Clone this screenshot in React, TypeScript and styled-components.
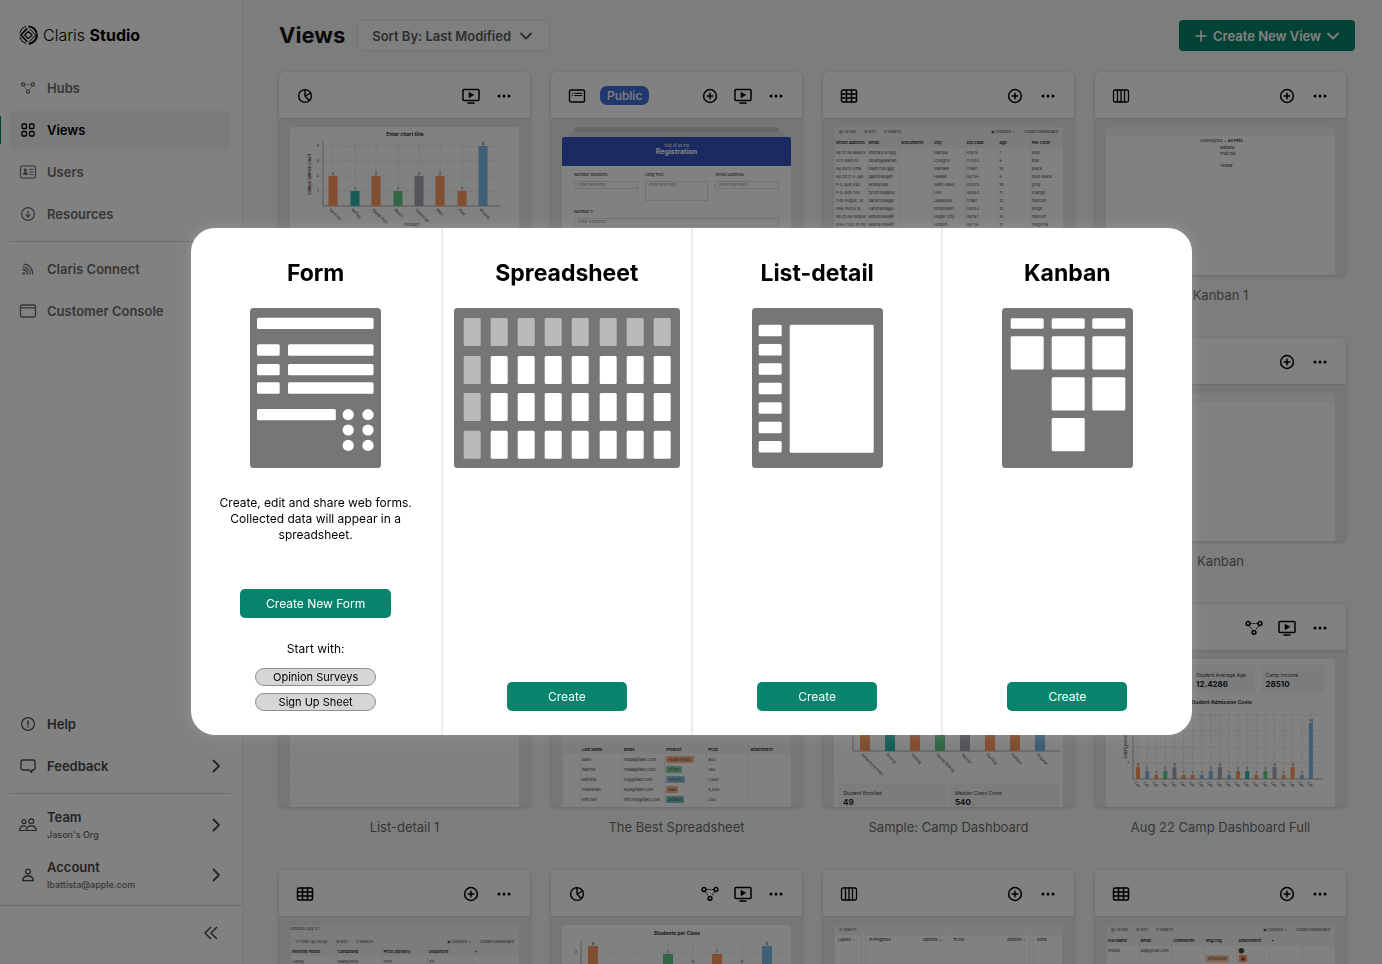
import React from "react";
import styled, { createGlobalStyle, css } from "styled-components";

const GlobalStyle = createGlobalStyle`
  *, *::before, *::after { box-sizing: border-box; }
  html, body { margin: 0; padding: 0; }
  body {
    font-family: Inter, "Liberation Sans", sans-serif;
    font-size: 13px;
    color: #000;
    background: #f6f9f8;
    overflow: hidden;
  }
  button, select, a { font: inherit; color: inherit; }
  a { text-decoration: none; }
`;

/* ---------- shell ---------- */

const Shell = styled.div`
  display: flex;
  height: 100vh;
  background: #f6f9f8;
`;

const Sidebar = styled.aside`
  display: flex;
  flex-direction: column;
  flex: 0 0 242px;
  background: #fff;
  box-shadow: 1px 0 1px #eceeed;
`;

const Brand = styled.a`
  display: flex;
  align-items: center;
  gap: 5px;
  height: 69px;
  padding-left: 19px;
  font-size: 16px;
  font-weight: 300;

  b { font-weight: 700; }
`;

const NavGroup = styled.nav`
  display: flex;
  flex-direction: column;
  gap: 4px;
  padding: 0 11px 0 9px;
`;

const NavItem = styled.a<{ $active?: boolean; $strong?: boolean }>`
  display: flex;
  align-items: center;
  gap: 10px;
  height: 38px;
  padding: 0 6px 0 10px;
  border-radius: 6px;
  font-weight: 600;
  color: ${(p) => (p.$active ? "#000" : p.$strong ? "#484848" : "#6c6c6c")};
  ${(p) =>
    p.$active &&
    css`
      position: relative;
      background: #f0f5f3;
      &::before {
        content: "";
        position: absolute;
        left: -9px;
        top: 5px;
        bottom: 5px;
        width: 1px;
        background: #07846b;
      }
    `}
  svg { flex: none; }
`;

const NavLabel = styled.span`
  flex: 1;
`;

const ProfileItem = styled(NavItem)`
  height: 50px;
`;

const ProfileText = styled.span`
  display: flex;
  flex: 1;
  flex-direction: column;
  gap: 3px;
  line-height: 16px;

  small {
    font-size: 9px;
    line-height: 14px;
    font-weight: 500;
    color: #6c6c6c;
  }
`;

const ProfileGroup = styled.nav`
  padding: 0 11px 5px 9px;
`;

const Rule = styled.hr<{ $low?: boolean }>`
  width: 222px;
  height: 1px;
  margin: 8px 0 ${(p) => (p.$low ? 6 : 8)}px 9px;
  border: 0;
  background: #dcdcdc;
`;

const Spacer = styled.div`
  flex: 1;
`;

const SidebarFooter = styled.div`
  display: flex;
  justify-content: flex-end;
  align-items: center;
  height: 59px;
  padding: 0 22px 4px 0;
  border-top: 1px solid #d6d6d6;
`;

const PlainButton = styled.button`
  display: flex;
  padding: 0;
  border: 0;
  background: none;
  color: ${(p) => p.color || "#000"};
`;

const Main = styled.main`
  flex: 1;
  min-width: 0;
  overflow: hidden;
`;

const TopBar = styled.header`
  display: flex;
  align-items: center;
  gap: 12px;
  padding: 20px 27px 21px 37px;
`;

const PageTitle = styled.h1`
  margin: 0;
  font-size: 22px;
  line-height: 31px;
  font-weight: 700;
  color: #111;
`;

const SortField = styled.label`
  display: flex;
  align-items: center;
  height: 31px;
  padding-right: 16px;
  border: 1px solid #e4e7e6;
  border-radius: 4px;
  background: #fafcfb;
  color: #5a5a5a;

  select {
    appearance: none;
    height: 29px;
    padding: 0 8px 0 14px;
    border: 0;
    background: transparent;
    font-weight: 600;
  }
`;

const CreateViewButton = styled.button`
  display: flex;
  align-items: center;
  gap: 5px;
  height: 31px;
  margin-left: auto;
  padding: 0 15px;
  border: 0;
  border-radius: 4px;
  background: #07846b;
  color: #fff;
  font-weight: 600;
`;

/* ---------- cards ---------- */

const CardGrid = styled.section`
  display: grid;
  grid-template-columns: repeat(4, minmax(0, 1fr));
  gap: 33px 21px;
  padding: 0 36px 0 37px;
`;

const CardCell = styled.article`
  display: flex;
  flex-direction: column;
  gap: 10px;
  height: 233px;
`;

const CardFrame = styled.div`
  display: flex;
  flex-direction: column;
  height: 203px;
  overflow: hidden;
  border-radius: 6px;
  background: #e9e9e9;
  box-shadow: 0 1px 4px rgba(0, 0, 0, 0.2);
`;

const CardHeader = styled.div`
  display: flex;
  flex: 0 0 47px;
  align-items: center;
  gap: 15px;
  padding: 1px 17px 0;
  border-bottom: 1px solid #d6d6d6;
  background: #fff;
`;

const PublicBadge = styled.span`
  margin-left: -1px;
  padding: 0 7px;
  border-radius: 7px;
  background: #4070d8;
  color: #fff;
  font-size: 12px;
  line-height: 19px;
  font-weight: 500;
`;

const CardTitle = styled.h2`
  margin: 0;
  font-size: 13px;
  line-height: 20px;
  font-weight: 400;
  text-align: center;
  color: #6c6c6c;
`;

const Preview = styled.div<{ $clear?: boolean }>`
  flex: 1;
  min-height: 0;
  margin: 8px 11px 0;
  overflow: hidden;
  border-radius: 3px 3px 0 0;
  background: ${(p) => (p.$clear ? "transparent" : "#fff")};
  font-size: 4px;
  line-height: 8px;
  color: #444;

  > svg { display: block; width: 100%; }
`;

/* ---------- previews ---------- */

const ToolStrip = styled.div`
  display: flex;
  gap: 8px;
  height: 9px;
  padding: 1px 5px 0;
  background: #f6f6f6;

  span:nth-child(3) { margin-right: auto; }
`;

const SheetName = styled.div`
  height: 12px;
  background: #f6f6f6;
`;

const DataTable = styled.table<{ $row: number }>`
  width: 100%;
  table-layout: fixed;
  border-collapse: collapse;

  th, td {
    height: ${(p) => p.$row}px;
    padding: 0 1px;
    border-left: 1px solid #f0f0f0;
    text-align: left;
    white-space: nowrap;
    line-height: ${(p) => p.$row - 1}px;
  }
  th {
    height: ${(p) => (p.$row === 8 ? 12 : p.$row)}px;
    font-weight: 600;
    color: #222;
    background: #f6f6f6;
  }
`;

const Tag = styled.span<{ $tone: string }>`
  padding: 1px 2px;
  border-radius: 1px;
  background: ${(p) => p.$tone};
`;

const StackSheet = styled.div<{ $inset: number; $tone: string }>`
  height: 5px;
  margin: 0 ${(p) => p.$inset}px;
  border-radius: 3px 3px 0 0;
  background: ${(p) => p.$tone};
`;

const Banner = styled.div`
  height: 29px;
  padding-top: 6px;
  border-radius: 2px 2px 0 0;
  background: #3656c0;
  color: #fff;
  text-align: center;
  line-height: 6px;

  strong { display: block; font-size: 7px; }
`;

const FormSheet = styled.div`
  display: grid;
  grid-template-columns: repeat(3, 1fr);
  align-content: start;
  gap: 7px;
  height: 110px;
  padding: 5px 12px;
  background: #fff;
`;

const FormField = styled.div<{ $tall?: boolean; $wide?: boolean }>`
  grid-column: ${(p) => (p.$wide ? "1 / -1" : "auto")};
  font-weight: 500;

  p {
    height: ${(p) => (p.$tall ? 20 : 8)}px;
    margin: 2px 0 0;
    padding-left: 3px;
    border: 1px solid #e2e2e2;
    line-height: 6px;
    font-weight: 400;
    color: #888;
  }
`;

const Tiles = styled.div`
  display: grid;
  grid-template-columns: 1fr 1fr;
  gap: 3px;
  padding: 8px 4px;
`;

const DashTiles = styled(Tiles)`
  grid-template-columns: 68px 1fr 1fr;
  gap: 6px;
  padding: 6px 11px 0;
  height: 33px;
`;

const Tile = styled.div`
  height: 27px;
  padding: 6px 5px 0;
  background: #f6f6f6;
  font-size: 5px;
  line-height: 8px;

  strong { display: block; font-size: 8px; line-height: 10px; color: #222; }
`;

const BoardStrip = styled.div`
  display: grid;
  grid-template-columns: 28px 1fr 1fr 30px;
  gap: 3px;

  div {
    display: flex;
    justify-content: space-between;
    height: 40px;
    padding: 1px 3px;
    border: 1px solid #f2f2f2;
    font-weight: 500;
  }
`;

const ListLines = styled.div`
  height: 148px;
  background: repeating-linear-gradient(#fff 0 15px, #f6f6f6 15px 16px);
`;

const SheetPad = styled.div`
  height: 85px;
  border-bottom: 10px solid #f6f6f6;
`;

const KanbanMini = styled.div`
  margin: 1px 0 0 94px;

  p { margin: 0 0 0 20px; font-weight: 500; line-height: 6px; }
  p + p { margin-bottom: 6px; }
`;

type Bar = { x: number; h: number; c: string; v?: string; l?: string };
const C = { o: "#ff9a60", t: "#2fb8ac", g: "#64cc88", p: "#aaa6b2", b: "#7cbde8" };

function BarChart({ title, tx, ty, axis, right, top, base, step, width, bars, label, side, h = 148 }: {
  title?: string; tx: number; ty: number; axis: number; right: number; top: number; base: number; step: number;
  width: number; bars: Bar[]; label?: string; side?: string; h?: number;
}) {
  const lines: number[] = [];
  for (let y = base - step; y > top; y -= step) lines.push(y);
  return (
    <svg viewBox={`0 0 229 ${h}`} fontSize="4" fill="#333">
      {title && <text x={tx} y={ty} textAnchor="middle" fontWeight="700" fontSize="5">{title}</text>}
      <g stroke="#e6e6e6" strokeDasharray="2 1">
        {lines.map((y) => <path key={y} d={`M${axis} ${y}H${right}`} />)}
        {bars.map((b) => <path key={b.x} d={`M${b.x} ${top}V${base}`} />)}
      </g>
      <path d={`M${axis} ${top}V${base}H${right}`} fill="none" stroke="#aaa" />
      {lines.map((y, i) => <text key={y} x={axis - 4} y={y + 1} textAnchor="end">{i + 1}</text>)}
      {bars.map((b) => (
        <g key={b.x}>
          <rect x={b.x - width / 2} y={base - b.h} width={width} height={b.h} fill={b.c} />
          {b.v && <text x={b.x} y={base - b.h - 1} textAnchor="middle">{b.v}</text>}
          {b.l && <text transform={`translate(${b.x - 4} ${base + 4}) rotate(45)`}>{b.l}</text>}
        </g>
      ))}
      {label && <text x="122" y={base + 20} textAnchor="middle">{label}</text>}
      {side && <text transform={`translate(21 ${(top + base) / 2 + 1}) rotate(-90)`} textAnchor="middle">{side}</text>}
    </svg>
  );
}

function Tools({ filter }: { filter?: boolean }) {
  return (
    <ToolStrip>
      <span>{filter ? "▽ Filter  ▤ Group" : "▤ Group"}</span><span>⇅ Sort</span><span>⚲ Search</span>
      <span>◉ Columns ⌄</span><span>Create Dashboard</span>
    </ToolStrip>
  );
}

const addressRows = [
  ["Ap #138 Mauris", "mdina3787@g", "", "Nampa", "61875", "7", "blue"],
  ["472 Nam St.", "dicam@wanan", "", "Cologne", "27633", "9", "teal"],
  ["Ap #513 Uma", "team7387@g", "", "Warsaw", "21987", "16", "black"],
  ["Ap #221 A Jan", "gabri288@m", "", "Hawaii", "08736", "6", "blue-black"],
  ["P.O. Box 482", "kelsey388", "", "Saint-Malo", "63325", "18", "grey"],
  ["P.O. Box 740", "tyron398@ou", "", "Lviv", "49303", "11", "orange"],
  ["240 Augue, St", "darlen288@y", "", "Jayapura", "12987", "13", "maroon"],
  ["498 Purus St.", "carol1838@p", "", "Eindhoven", "29353", "10", "beige"],
  ["Ap #248 Neque", "almon3889@", "", "Hoger City", "48787", "15", "maroon"],
  ["936-7202 In Rd.", "akaha3488@", "", "Hodeni", "08736", "12", "magenta"],
];

function AddressPreview() {
  return (
    <Preview>
      <Tools />
      <DataTable $row={8}>
        <thead><tr>{["Street Address", "Email", "Documents", "City", "Zip Code", "Age", "Fav Color"].map((h) => <th key={h}>{h}</th>)}</tr></thead>
        <tbody>{addressRows.map((r) => <tr key={r[0]}>{r.map((c, i) => <td key={i}>{c}</td>)}</tr>)}</tbody>
      </DataTable>
    </Preview>
  );
}

const productRows = [
  ["Bass", "muda@fake.com", "Apple Music", "#ffb78c", "$53"],
  ["Warner", "hvala@fake.com", "Jif Inc", "#8fd8a8", "180"],
  ["Battista", "hog@fake.com", "Shopify", "#9ccbe8", "1,885"],
  ["Shanahan", "kyla@fake.com", "Sale", "#ffb78c", "6,500"],
  ["Mitchell", "mitchell@fake.com", "Default", "#7cc8c4", "350"],
];

function ProductPreview() {
  return (
    <Preview>
      <SheetPad />
      <DataTable $row={10}>
        <colgroup><col width="18" /><col /><col /><col /><col /><col /></colgroup>
        <thead><tr><th />{["Last Name", "Email", "Product", "Price", "Attachment"].map((h) => <th key={h}>{h}</th>)}</tr></thead>
        <tbody>
          {productRows.map((r) => (
            <tr key={r[0]}><td /><td>{r[0]}</td><td>{r[1]}</td><td><Tag $tone={r[3]}>{r[2]}</Tag></td><td>{r[4]}</td><td /></tr>
          ))}
        </tbody>
      </DataTable>
    </Preview>
  );
}

function FormPreview() {
  return (
    <Preview $clear>
      <StackSheet $inset={12} $tone="#c9cccb" />
      <StackSheet $inset={6} $tone="#dbdedd" />
      <Banner>Title of all the<strong>Registration</strong></Banner>
      <FormSheet>
        <FormField>Number Students<p>Enter text here</p></FormField>
        <FormField $tall>Long Text<p>Enter text here</p></FormField>
        <FormField>Street Address<p>Enter text here</p></FormField>
        <FormField $wide>Number 2<p>Enter a number</p></FormField>
      </FormSheet>
    </Preview>
  );
}

const firstBars: Bar[] = [
  { x: 43, h: 30, c: C.o, v: "2", l: "SanFran" }, { x: 65, h: 15, c: C.t, v: "1", l: "NoTag" },
  { x: 86, h: 30, c: C.o, v: "2", l: "Apple Gdn" }, { x: 108, h: 15, c: C.g, v: "1", l: "Music" },
  { x: 129, h: 30, c: C.p, v: "2", l: "Subscript" }, { x: 150, h: 30, c: C.o, v: "2", l: "Mac" },
  { x: 172, h: 15, c: C.o, v: "1", l: "iPad" }, { x: 193, h: 60, c: C.b, v: "4", l: "iPhone" },
];

const campLabels = ["Adventure Hiking", "Diving", "Sailing", "Horse Riding", "Tennis", "Surfing", "Pottery", "Theater"];
const campColors = [C.o, C.t, C.o, C.g, C.p, C.o, C.o, C.b];
const campBars: Bar[] = campLabels.map((l, i) => ({ x: 31 + i * 25, h: 40, c: campColors[i], l }));

const costHeights = [12, 8, 4, 8, 12, 4, 4, 4, 8, 12, 4, 8, 8, 4, 8, 12, 4, 12, 4, 56];
const costColors = [C.o, C.b, C.o, C.g, C.p, C.o, C.o, C.b, C.b, C.p, C.b, C.o, C.t, C.o, C.g, C.p, C.o, C.o, C.b, C.b];
const costBars: Bar[] = costHeights.map((h, i) => ({ x: 32 + i * 9.1, h, c: costColors[i], v: String(h / 4), l: "Cal" }));

const classBars: Bar[] = [
  { x: 31, h: 60, c: C.o, v: "9" }, { x: 106, h: 52, c: C.g, v: "7" }, { x: 131, h: 42, c: C.p, v: "5" },
  { x: 155, h: 52, c: C.o, v: "7" }, { x: 180, h: 42, c: C.o, v: "6" }, { x: 205, h: 60, c: C.b, v: "9" },
];

/* ---------- icons ---------- */

function Icon({ children, size = 18, w = 1.4, box = "0 0 18 18" }: { children: React.ReactNode; size?: number; w?: number; box?: string }) {
  return (
    <svg width={size} height={size} viewBox={box} fill="none" stroke="currentColor" strokeWidth={w} strokeLinecap="round" strokeLinejoin="round" aria-hidden="true">
      {children}
    </svg>
  );
}

const Dots = () => <Icon><g fill="currentColor" stroke="none"><circle cx="4" cy="9" r="1.5" /><circle cx="9" cy="9" r="1.5" /><circle cx="14" cy="9" r="1.5" /></g></Icon>;
const Plus = () => <Icon w={1.5}><circle cx="9" cy="9" r="6.4" /><path d="M9 6.2v5.6M6.2 9h5.6" /></Icon>;
const Screen = () => <Icon w={1.5}><rect x="1" y="2.5" width="16" height="11" rx="1" /><path d="M6 16h6" /><path d="M7 5.5v5.2L11.6 8z" fill="currentColor" strokeWidth=".6" /></Icon>;
const Pie = () => <Icon w={1.4}><circle cx="9" cy="9" r="6.4" /><path d="M9 2.6V9l4.3 4.6M9 9l5.8-3" /></Icon>;
const FormIcon = () => <Icon w={1.4}><rect x="1.5" y="3" width="15" height="12" rx="1.5" /><path d="M4.2 6.3h.4M6.6 6.3h7.2M4.2 8.6h.4M6.6 8.6h7.2" strokeWidth="1" /></Icon>;
const TableIcon = () => <Icon w={1.5}><rect x="1.5" y="3" width="15" height="12" rx="1.5" /><path d="M1.5 7h15M1.5 11h15M6.5 3v12M11.5 3v12" /></Icon>;
const BoardIcon = () => <Icon w={1.3}><rect x="1.5" y="3" width="15" height="12" rx="1.5" /><path d="M5.5 3v12M9 3v12M12.5 3v12" /></Icon>;
const HubIcon = ({ box }: { box?: string }) => <Icon w={1.5} box={box}><circle cx="3" cy="4.5" r="1.9" /><circle cx="15" cy="4.5" r="1.9" /><circle cx="9" cy="13.3" r="1.9" /><path d="M6 4.5h6M4.5 7l2.8 4M13.5 7l-2.800 4" strokeWidth=".9" strokeDasharray="1 1.5" /></Icon>;
const ViewsIcon = () => <Icon w={1.3}><rect x="3" y="3" width="4.500" height="4.500" rx="1" /><rect x="10.500" y="3" width="4.500" height="4.500" rx="1" /><rect x="3" y="10.500" width="4.500" height="4.500" rx="1" /><rect x="10.500" y="10.500" width="4.500" height="4.500" rx="1" /></Icon>;
const UsersIcon = () => <Icon w={1.2}><rect x="1.500" y="3" width="15" height="12" rx="1.500" /><circle cx="6.300" cy="7.200" r="1" fill="currentColor" /><path d="M4.500 11.200c0-2 3.800-2 3.800 0z" fill="currentColor" /><path d="M10.800 6.400h3.200M10.800 9h3.200M10.800 11.600h3.200" strokeWidth=".9" /></Icon>;
const DownIcon = () => <Icon w={1.2}><circle cx="9" cy="9" r="6.400" /><path d="M9 6v6M6.800 9.900L9 12.100l2.200-2.200" /></Icon>;
const FeedIcon = () => <Icon w={1.3}><path d="M4 9.500a5 5 0 0 1 4.500 4.700M4 6.800a7.600 7.600 0 0 1 7.200 7.400M5 4.200c5 .2 8.600 4.400 8.800 9.800" /><circle cx="4.700" cy="13.500" r=".7" fill="currentColor" /></Icon>;
const WindowIcon = () => <Icon w={1.3}><rect x="1.500" y="3" width="15" height="12" rx="1.500" /><path d="M1.500 5.800h15" /></Icon>;
const HelpIcon = () => <Icon w={1.2}><circle cx="9" cy="9" r="6.400" /><path d="M9 6v3.500M9 11.800v.2" strokeWidth="1.400" /></Icon>;
const ChatIcon = () => <Icon w={1.3}><path d="M4 3h10a2 2 0 0 1 2 2v6.500a1.500 1.500 0 0 1-1.500 1.500h-1.700v2.500l-3-2.500H4a2 2 0 0 1-2-2V5a2 2 0 0 1 2-2z" /></Icon>;
const TeamIcon = () => <Icon w={1.2}><circle cx="5" cy="5.600" r="2" /><circle cx="12.300" cy="5.200" r="2.400" /><path d="M6 14.500H.7c-.4-3 1.700-4.600 3.900-4.600 1 0 1.600.2 2.200.6M7.300 14.500h10c-.2-3-2.200-4.600-4.900-4.600s-4.900 1.600-5.100 4.600z" /></Icon>;
const PersonIcon = () => <Icon w={1.3}><circle cx="9" cy="5.600" r="2.400" /><path d="M3.700 14.600h10.600c-.2-3-2.500-4.600-5.300-4.600s-5.100 1.600-5.300 4.600z" /></Icon>;
const ChevronRight = () => <Icon w={1.8}><path d="M6.500 3.500L12 9l-5.500 5.500" /></Icon>;
const ChevronDown = () => <Icon size={14} box="0 0 14 14" w={1.8}><path d="M2 4.500l5 5 5-5" /></Icon>;
const SmallPlus = () => <Icon size={14} box="0 0 14 14" w={1.6}><path d="M7 2v10M2 7h10" /></Icon>;
const Collapse = () => <Icon w={1.5}><path d="M8.500 3.500L3 9l5.500 5.500M14.500 3.500L9 9l5.500 5.500" /></Icon>;
const ClarisMark = () => (
  <svg width="19" height="20" viewBox="0 0 19 20" fill="none" stroke="#000" aria-hidden="true">
    <path d="M7.200 1.300A9 9 0 0 0 .8 7.800M.8 12a9 9 0 0 0 6.400 6.600" strokeWidth="1" />
    <path d="M9.300 1.300C14 1.300 17.600 5 17.900 9.800" strokeWidth="1.800" />
    <path d="M17.900 10c-.2 4.800-3.600 8.300-8.200 8.600" strokeWidth="2.200" />
    <path d="M8.300 3.400L1.900 10l6.400 6.600" strokeWidth="1.700" />
    <path d="M10.600 3.700l6 6.300-6 6.300" strokeWidth="1" />
    <path d="M9.400 6.300L5.700 10l3.700 3.700L13.100 10z" strokeWidth="1.200" strokeLinejoin="round" />
  </svg>
);

/* ---------- card ---------- */

const actionIcons = { plus: Plus, screen: Screen, hub: HubIcon, dots: Dots };
const actionNames = { plus: "Add", screen: "Present", hub: "Hubs", dots: "More" };
type Action = keyof typeof actionIcons;

function ViewCard({ icon, badge, actions = [], title, children }: {
  icon?: React.ReactNode; badge?: string; actions?: Action[]; title?: string; children?: React.ReactNode;
}) {
  return (
    <CardCell>
      <CardFrame>
        <CardHeader>
          {icon}
          {badge && <PublicBadge>{badge}</PublicBadge>}
          <Spacer />
          {actions.map((a) => {
            const Glyph = actionIcons[a];
            return <PlainButton key={a} aria-label={actionNames[a]}><Glyph /></PlainButton>;
          })}
        </CardHeader>
        {children}
      </CardFrame>
      {title && <CardTitle>{title}</CardTitle>}
    </CardCell>
  );
}

/* ---------- dialog ---------- */

const Backdrop = styled.div`
  position: fixed;
  inset: 0;
  display: flex;
  align-items: center;
  justify-content: center;
  padding: 20px 20px 21px;
  background: rgba(0, 0, 0, 0.495);
`;

const Dialog = styled.div`
  display: grid;
  grid-template-columns: repeat(4, minmax(0, 1fr));
  width: 100%;
  max-width: 1001px;
  border-radius: 24px;
  background: #fff;
  box-shadow: 0 0 12px rgba(255, 255, 255, 0.16);
`;

const Option = styled.section`
  display: flex;
  flex-direction: column;
  align-items: center;
  padding: 31px 10px 24px;
  text-align: center;

  & + & { border-left: 2px solid #ececec; }

  > svg { display: block; margin-top: 21px; max-width: 100%; }
`;

const OptionTitle = styled.h2`
  margin: 0;
  font-size: 23px;
  line-height: 28px;
  font-weight: 700;
`;

const OptionText = styled.p<{ $gap: number }>`
  max-width: 200px;
  margin: ${(p) => p.$gap}px 0 0;
  font-size: 12px;
  line-height: 16px;
`;

const ActionButton = styled.button<{ $wide?: boolean }>`
  width: ${(p) => (p.$wide ? 151 : 120)}px;
  height: 29px;
  margin-top: ${(p) => (p.$wide ? "46px" : "auto")};
  padding: 0;
  border: 0;
  border-radius: 5px;
  background: #07846b;
  color: #fff;
  font-size: 12px;
`;

const Templates = styled.div`
  display: flex;
  flex-direction: column;
  gap: 7px;
  margin-top: 11px;
`;

const TemplateButton = styled.button`
  width: 121px;
  height: 18px;
  padding: 0;
  border: 1px solid #8f8f8f;
  border-radius: 9px;
  background: #d6d6d6;
  font-size: 11px;
  line-height: 16px;
`;

type Box = [number, number, number, number];

function Illustration({ width, boxes, soft = [], dots = [] }: { width: number; boxes: Box[]; soft?: Box[]; dots?: [number, number][] }) {
  return (
    <svg width={width} height="160" viewBox={`0 0 ${width} 160`} aria-hidden="true">
      <rect width={width} height="160" rx="3.5" fill="#767676" />
      {soft.map(([x, y, w, h]) => <rect key={`${x} ${y}`} x={x} y={y} width={w} height={h} rx="1.5" fill="#bababa" />)}
      {boxes.map(([x, y, w, h]) => <rect key={`${x} ${y}`} x={x} y={y} width={w} height={h} rx="1.5" fill="#fff" />)}
      {dots.map(([x, y]) => <circle key={`${x} ${y}`} cx={x} cy={y} r="5.6" fill="#fff" />)}
    </svg>
  );
}

const formBoxes: Box[] = [
  [7, 9.7, 116.5, 11.3], [7, 36.2, 22.7, 11.5], [38, 36.2, 85.5, 11.5], [7, 56, 22.7, 11.3],
  [38, 56, 85.5, 11.3], [7, 74.2, 22.7, 11.5], [38, 74.2, 85.5, 11.5], [7, 101, 78.8, 11.3],
];
const formDots: [number, number][] = [98.2, 118].flatMap((x) => [106.6, 122, 137.4].map((y) => [x, y] as [number, number]));
const sheetX = [9.7, 36.7, 63.7, 90.7, 117.7, 145.7, 172.7, 199.7];
const sheetY = [10, 48, 85, 122.7];
const sheetCells = sheetY.flatMap((y, r) => sheetX.map((x, c) => ({ head: r === 0 || c === 0, box: [x, y, 17, 28] as Box })));
const listBoxes: Box[] = [
  ...[16.7, 36, 55.3, 74.7, 94.3, 113.7, 133].map((y) => [6.7, y, 23, 11.5] as Box),
  [37.7, 16.7, 84, 128],
];
const boardBoxes: Box[] = [
  ...[8.7, 49.7, 90.3].flatMap((x) => [[x, 10.3, 33, 10.5], [x, 28.3, 33, 33.3]] as Box[]),
  [49.7, 69.2, 33, 33.3], [90.3, 69.2, 33, 33.3], [49.7, 110, 33, 33.3],
];

export default function App() {
  return (
    <>
      <GlobalStyle />
      <Shell>
        <Sidebar>
          <Brand href="#"><ClarisMark /><span>Claris <b>Studio</b></span></Brand>
          <NavGroup>
            <NavItem href="#"><HubIcon box="-2 -2 22 22" /><NavLabel>Hubs</NavLabel></NavItem>
            <NavItem href="#" $active><ViewsIcon /><NavLabel>Views</NavLabel></NavItem>
            <NavItem href="#"><UsersIcon /><NavLabel>Users</NavLabel></NavItem>
            <NavItem href="#"><DownIcon /><NavLabel>Resources</NavLabel></NavItem>
          </NavGroup>
          <Rule />
          <NavGroup>
            <NavItem href="#"><FeedIcon /><NavLabel>Claris Connect</NavLabel></NavItem>
            <NavItem href="#"><WindowIcon /><NavLabel>Customer Console</NavLabel></NavItem>
          </NavGroup>
          <Spacer />
          <NavGroup>
            <NavItem href="#" $strong><HelpIcon /><NavLabel>Help</NavLabel></NavItem>
            <NavItem href="#" $strong><ChatIcon /><NavLabel>Feedback</NavLabel><ChevronRight /></NavItem>
          </NavGroup>
          <Rule $low />
          <ProfileGroup>
            <ProfileItem href="#" $strong><TeamIcon /><ProfileText>Team<small>Jason's Org</small></ProfileText><ChevronRight /></ProfileItem>
            <ProfileItem href="#" $strong><PersonIcon /><ProfileText>Account<small>lbattista@apple.com</small></ProfileText><ChevronRight /></ProfileItem>
          </ProfileGroup>
          <SidebarFooter><PlainButton color="#444" aria-label="Collapse"><Collapse /></PlainButton></SidebarFooter>
        </Sidebar>

        <Main>
          <TopBar>
            <PageTitle>Views</PageTitle>
            <SortField>
              <select aria-label="Sort"><option>Sort By: Last Modified</option></select>
              <ChevronDown />
            </SortField>
            <CreateViewButton><SmallPlus />Create New View<ChevronDown /></CreateViewButton>
          </TopBar>
          <CardGrid>
            <ViewCard icon={<Pie />} actions={["screen", "dots"]}>
              <Preview>
                <BarChart title="Enter chart title" tx={115} ty={9} axis={33} right={210} top={14} base={79} step={15} width={9} bars={firstBars} label="Product" side="Sample opinion count" />
              </Preview>
            </ViewCard>
            <ViewCard icon={<FormIcon />} badge="Public" actions={["plus", "screen", "dots"]}><FormPreview /></ViewCard>
            <ViewCard icon={<TableIcon />} actions={["plus", "dots"]}><AddressPreview /></ViewCard>
            <ViewCard icon={<BoardIcon />} actions={["plus", "dots"]} title="Kanban 1">
              <Preview>
                <ToolStrip />
                <KanbanMini>Unassigned ⌄ <b>All Pets</b><p>Banana</p><p>Fruit cat</p><p>Yellow</p></KanbanMini>
              </Preview>
            </ViewCard>

            <ViewCard />
            <ViewCard />
            <ViewCard />
            <ViewCard actions={["plus", "dots"]} title="Kanban"><Preview><ToolStrip /></Preview></ViewCard>

            <ViewCard title="List-detail 1"><Preview><ListLines /></Preview></ViewCard>
            <ViewCard title="The Best Spreadsheet"><ProductPreview /></ViewCard>
            <ViewCard title="Sample: Camp Dashboard">
              <Preview>
                <BarChart tx={115} ty={9} axis={19} right={226} top={20} base={92} step={30} width={10} bars={campBars} h={116} />
                <Tiles><Tile>Student Enrolled<strong>49</strong></Tile><Tile>Median Class Costs<strong>540</strong></Tile></Tiles>
              </Preview>
            </ViewCard>
            <ViewCard actions={["hub", "screen", "dots"]} title="Aug 22 Camp Dashboard Full">
              <Preview>
                <DashTiles>
                  <span />
                  <Tile>Student Average Age<strong>12.4286</strong></Tile>
                  <Tile>Camp Income<strong>28510</strong></Tile>
                </DashTiles>
                <BarChart title="Student Admission Costs" tx={115} ty={12} axis={27} right={217} top={18} base={87} step={16} width={4} bars={costBars} side="Count Record" />
              </Preview>
            </ViewCard>

            <ViewCard icon={<TableIcon />} actions={["plus", "dots"]}>
              <Preview>
                <SheetName>Untitled July 27</SheetName>
                <Tools filter />
                <DataTable $row={10}>
                  <thead><tr><th>Favorite Foods</th><th>Cardboard</th><th>Price (dollars)</th><th>Departure</th><th>+</th></tr></thead>
                  <tbody><tr><td>Candy</td><td>Nampsville</td><td>Free</td><td>45</td><td /></tr></tbody>
                </DataTable>
              </Preview>
            </ViewCard>
            <ViewCard icon={<Pie />} actions={["hub", "screen", "dots"]}>
              <Preview>
                <BarChart title="Students per Class" tx={115} ty={10} axis={19} right={225} top={16} base={81} step={18} width={10} bars={classBars} />
              </Preview>
            </ViewCard>
            <ViewCard icon={<BoardIcon />} actions={["plus", "dots"]}>
              <Preview>
                <ToolStrip><span>⚲ Search</span></ToolStrip>
                <BoardStrip>
                  <div>Layout ⌄</div><div><span>In Progress</span><span>Options ⌄</span></div>
                  <div><span>To Do</span><span>Options ⌄</span></div><div>Done</div>
                </BoardStrip>
              </Preview>
            </ViewCard>
            <ViewCard icon={<TableIcon />} actions={["plus", "dots"]}>
              <Preview>
                <Tools />
                <DataTable $row={8}>
                  <thead><tr><th>Full Name</th><th>Email</th><th>Comments</th><th>Img/Org</th><th>Attachment</th><th>+</th><th /></tr></thead>
                  <tbody>
                    <tr><td>Khalid</td><td>ad@gmail.com</td><td /><td /><td>⬤</td><td /><td /></tr>
                    <tr><td /><td /><td /><td><Tag $tone="#ffc9a6">Influencer</Tag></td><td><Tag $tone="#ff9a60">▣</Tag></td><td /><td /></tr>
                  </tbody>
                </DataTable>
              </Preview>
            </ViewCard>
          </CardGrid>
        </Main>
      </Shell>

      <Backdrop>
        <Dialog role="dialog" aria-modal="true" aria-label="Create New View">
          <Option>
            <OptionTitle>Form</OptionTitle>
            <Illustration width={131} boxes={formBoxes} dots={formDots} />
            <OptionText $gap={27}>Create, edit and share web forms. Collected data will appear in a spreadsheet.</OptionText>
            <ActionButton $wide>Create New Form</ActionButton>
            <OptionText $gap={23}>Start with:</OptionText>
            <Templates>
              <TemplateButton>Opinion Surveys</TemplateButton>
              <TemplateButton>Sign Up Sheet</TemplateButton>
            </Templates>
          </Option>
          <Option>
            <OptionTitle>Spreadsheet</OptionTitle>
            <Illustration width={226} boxes={sheetCells.filter((c) => !c.head).map((c) => c.box)} soft={sheetCells.filter((c) => c.head).map((c) => c.box)} />
            <ActionButton>Create</ActionButton>
          </Option>
          <Option>
            <OptionTitle>List-detail</OptionTitle>
            <Illustration width={131} boxes={listBoxes} />
            <ActionButton>Create</ActionButton>
          </Option>
          <Option>
            <OptionTitle>Kanban</OptionTitle>
            <Illustration width={131} boxes={boardBoxes} />
            <ActionButton>Create</ActionButton>
          </Option>
        </Dialog>
      </Backdrop>
    </>
  );
}
